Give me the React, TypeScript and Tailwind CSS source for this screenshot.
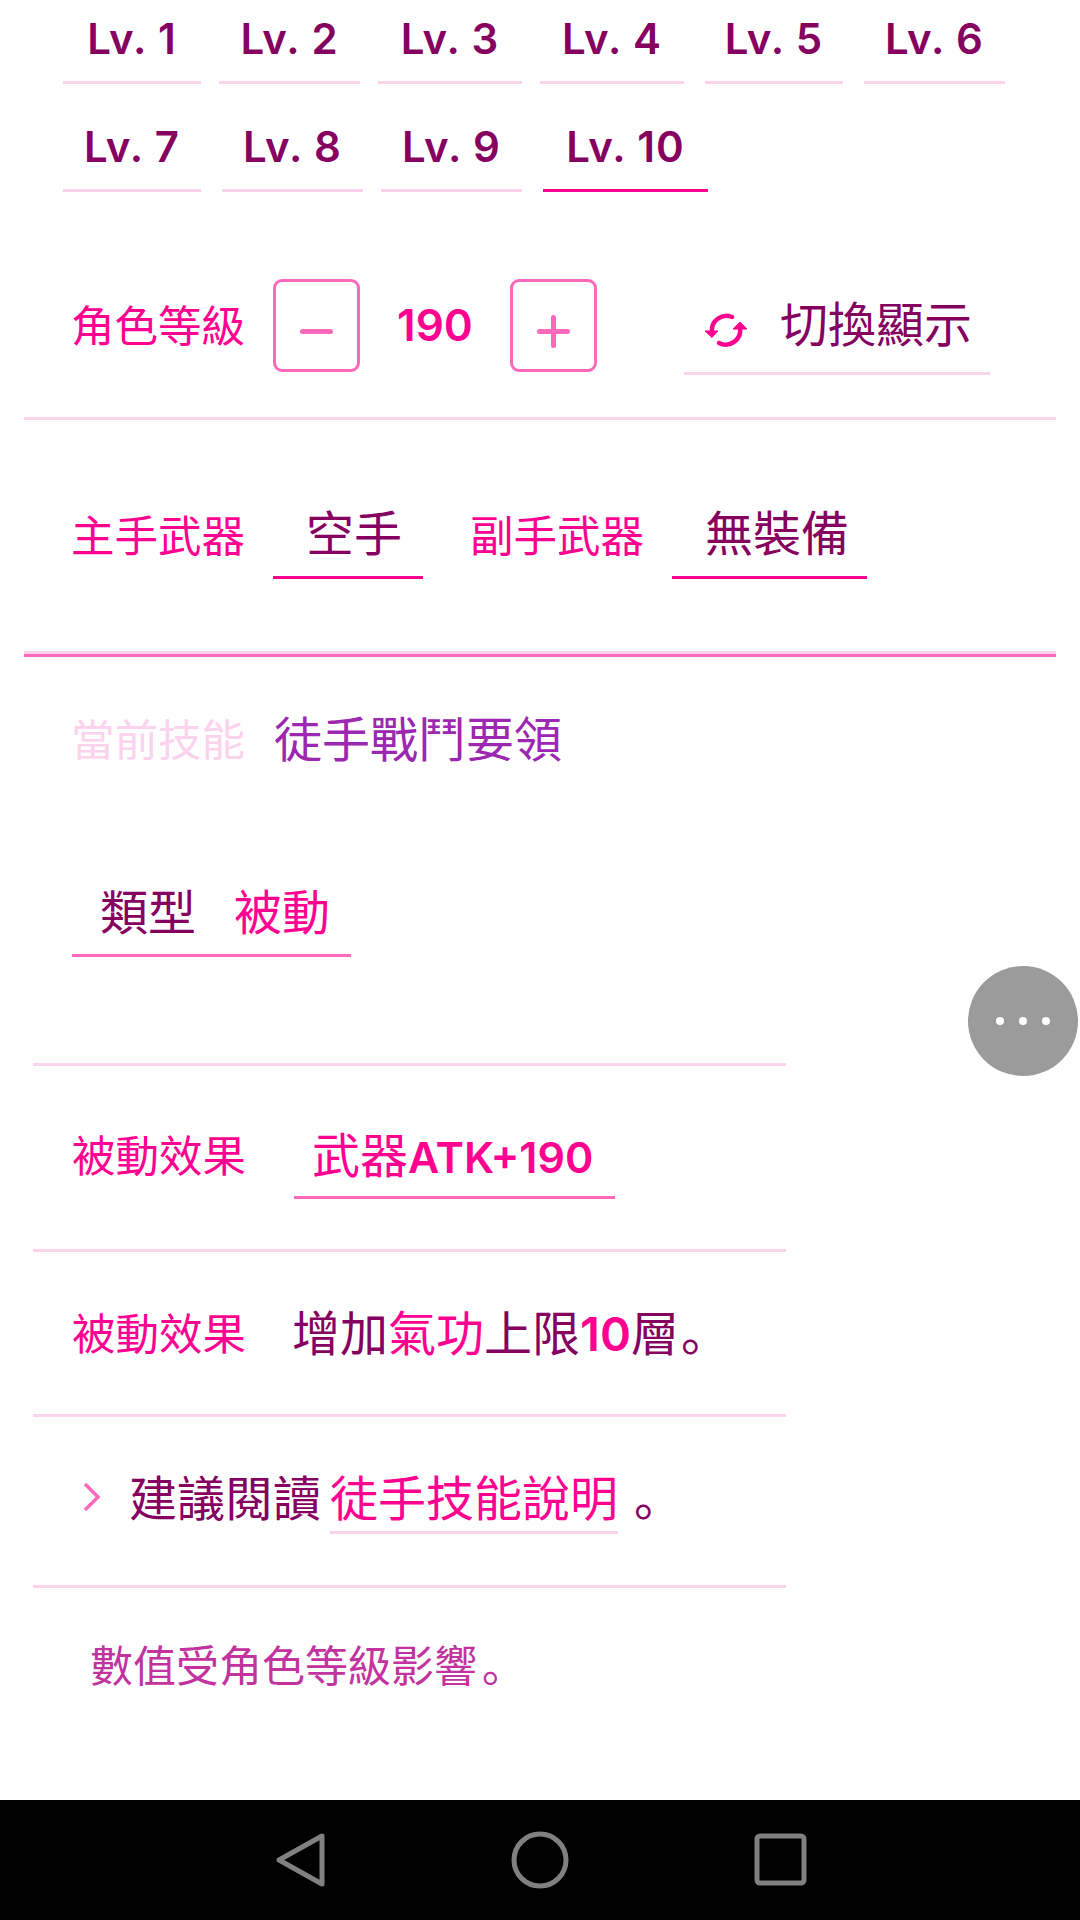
import React from "react";

const font = { fontFamily: '"Inter", "Noto Sans CJK SC", sans-serif' };

function Tab({ label, w, active }: { label: string; w: string; active?: boolean }) {
  return (
    <div className={`${w} h-[84px] shrink-0 flex items-start justify-center border-b-[3px] ${active ? "border-[#ff0090]" : "border-[#fcd3ec]"}`}>
      <span className="mt-[15px] text-[42px] leading-[48px] tracking-[1px] font-semibold text-[#85005f] whitespace-nowrap">{label}</span>
    </div>
  );
}

function Stepper({ sign }: { sign: "-" | "+" }) {
  return (
    <div className="w-[87px] h-[93px] shrink-0 rounded-[9px] border-[3px] border-[#ff69bb] flex items-center justify-center pt-[12px]">
      <svg width="33" height="33" viewBox="0 0 33 33">
        <path d={sign === "-" ? "M2.5 16.5H30.5" : "M2.5 16.5H30.5M16.5 2.5V30.5"} stroke="#ff69bb" strokeWidth="5" strokeLinecap="round" fill="none" />
      </svg>
    </div>
  );
}

function Divider() {
  return <div className="h-[3px] shrink-0 w-[753px] ml-[33px] bg-[#fcd3ec]" />;
}

export default function App() {
  return (
    <div style={font} className="relative w-[1080px] h-[1920px] bg-white overflow-hidden flex flex-col">
      <div className="h-[192px] shrink-0 pl-[63px] flex flex-col gap-[24px]">
        <div className="flex h-[84px]">
          <Tab label="Lv. 1" w="w-[138px]" />
          <div className="w-[18px]" />
          <Tab label="Lv. 2" w="w-[141px]" />
          <div className="w-[18px]" />
          <Tab label="Lv. 3" w="w-[144px]" />
          <div className="w-[18px]" />
          <Tab label="Lv. 4" w="w-[144px]" />
          <div className="w-[21px]" />
          <Tab label="Lv. 5" w="w-[138px]" />
          <div className="w-[21px]" />
          <Tab label="Lv. 6" w="w-[141px]" />
        </div>
        <div className="flex h-[84px]">
          <Tab label="Lv. 7" w="w-[138px]" />
          <div className="w-[21px]" />
          <Tab label="Lv. 8" w="w-[141px]" />
          <div className="w-[18px]" />
          <Tab label="Lv. 9" w="w-[141px]" />
          <div className="w-[21px]" />
          <Tab label="Lv. 10" w="w-[165px]" active />
        </div>
      </div>

      <div className="h-[228px] shrink-0 ml-[24px] w-[1032px] border-b-[3px] border-[#fcd3ec] pl-[47px] pt-[87px] flex items-start">
        <span className="text-[43.5px] leading-[94px] text-[#ff0090] w-[202px] shrink-0 whitespace-nowrap">角色等級</span>
        <Stepper sign="-" />
        <span className="w-[150px] shrink-0 text-center text-[44px] leading-[93px] font-semibold text-[#ff0090]">190</span>
        <Stepper sign="+" />
        <div className="ml-[87px] w-[306px] h-[96px] border-b-[3px] border-[#fcd3ec] flex items-start shrink-0">
          <svg className="ml-[20px] mt-[33px] shrink-0" width="46" height="46" viewBox="0 0 46 46">
            <path d="M8 20 A14.5 14.5 0 0 1 28 5" stroke="#ff0090" strokeWidth="4.5" fill="none" strokeLinecap="round" />
            <path d="M36 16 A14.5 14.5 0 0 1 15 31" stroke="#ff0090" strokeWidth="4.5" fill="none" strokeLinecap="round" />
            <path d="M1 19 L14 19 L8 25.5 Z M29 17 L43 17 L36 10 Z" fill="#ff0090" stroke="#ff0090" strokeLinejoin="round" />
          </svg>
          <span className="ml-[30px] text-[48px] leading-[64px] mt-[14px] text-[#85005f] whitespace-nowrap">切換顯示</span>
        </div>
      </div>

      <div className="h-[231px] shrink-0 ml-[24px] w-[1032px] pl-[47px] pt-[81px] flex items-start">
        <span className="text-[43.5px] leading-[70px] text-[#ff0090] w-[202px] shrink-0 whitespace-nowrap">主手武器</span>
        <div className="w-[150px] h-[78px] shrink-0 border-b-[3px] border-[#ff0090] pl-[33px] pt-[1px]">
          <span className="text-[48px] leading-[64px] text-[#85005f] whitespace-nowrap">空手</span>
        </div>
        <span className="ml-[47px] text-[43.5px] leading-[70px] text-[#ff0090] w-[202px] shrink-0 whitespace-nowrap">副手武器</span>
        <div className="w-[195px] h-[78px] shrink-0 border-b-[3px] border-[#ff0090] pl-[33px] pt-[1px]">
          <span className="text-[48px] leading-[64px] text-[#85005f] whitespace-nowrap">無裝備</span>
        </div>
      </div>

      <div className="h-[3px] shrink-0 ml-[24px] w-[1032px] bg-[#fcd3ec]" />
      <div className="h-[3px] shrink-0 ml-[24px] w-[1032px] bg-[#ff69bb]" />

      <div className="h-[160px] shrink-0 pl-[71px] pt-[51px] flex items-start">
        <span className="text-[43.5px] leading-[64px] text-[#fcd3ec] w-[203px] shrink-0 whitespace-nowrap">當前技能</span>
        <span className="text-[48px] leading-[64px] text-[#9c27b0] whitespace-nowrap">徒手戰鬥要領</span>
      </div>

      <div className="h-[140px] shrink-0 pl-[72px] pt-[39px]">
        <div className="w-[279px] h-[101px] border-b-[3px] border-[#ff69bb] pl-[28px] pt-[25px] flex">
          <span className="text-[48px] leading-[64px] text-[#85005f] w-[134px] shrink-0 whitespace-nowrap">類型</span>
          <span className="text-[48px] leading-[64px] text-[#ff0090] whitespace-nowrap">被動</span>
        </div>
      </div>

      <div className="h-[109px] shrink-0 pt-[106px]">
        <Divider />
      </div>

      <div className="h-[183px] shrink-0 pl-[72px] pt-[58px] flex items-start">
        <span className="text-[43.5px] leading-[64px] text-[#ff0090] w-[222px] shrink-0 whitespace-nowrap">被動效果</span>
        <div className="w-[321px] h-[75px] border-b-[3px] border-[#ff69bb] pl-[18px] whitespace-nowrap">
          <span className="text-[48px] leading-[64px] text-[#ff0090]">武器<span className="text-[43px] font-semibold">ATK+190</span></span>
        </div>
      </div>

      <Divider />

      <div className="h-[162px] shrink-0 pl-[72px] pt-[50px] flex items-start">
        <span className="text-[43.5px] leading-[64px] text-[#ff0090] w-[222px] shrink-0 whitespace-nowrap">被動效果</span>
        <span className="text-[48px] leading-[64px] text-[#85005f] whitespace-nowrap -ml-[2px]">
          增加<span className="text-[#ff0090]">氣功</span>上限<span className="text-[#ff0090] text-[47px] font-semibold">10</span>層<span className="ml-[2px]">。</span>
        </span>
      </div>

      <Divider />

      <div className="h-[168px] shrink-0 pl-[83px] pt-[50px] flex items-start">
        <svg className="mt-[15px] shrink-0" width="17" height="30" viewBox="0 0 17 30">
          <path d="M2 2 L15 15 L2 28" stroke="#ff69bb" strokeWidth="3.5" fill="none" />
        </svg>
        <span className="ml-[29px] text-[48px] leading-[64px] text-[#85005f] w-[201px] shrink-0 whitespace-nowrap">建議閱讀</span>
        <span className="w-[288px] h-[67px] shrink-0 border-b-[3px] border-[#fcd3ec] text-[48px] leading-[64px] text-[#ff0090] text-center whitespace-nowrap">徒手技能說明</span>
        <span className="ml-[16px] text-[48px] leading-[64px] text-[#85005f]">。</span>
      </div>

      <Divider />

      <div className="flex-1 pl-[90px] pt-[46px]">
        <span className="text-[43px] leading-[64px] text-[#c2339f] whitespace-nowrap">數值受角色等級影響<span className="ml-[5px]">。</span></span>
      </div>

      <div className="h-[120px] shrink-0 bg-black flex items-center justify-start pl-[276px]">
        <svg width="540" height="60" viewBox="0 0 540 60" fill="none" stroke="#808080" strokeWidth="5" strokeLinejoin="round">
          <path d="M46 6 L46 54 L3 30 Z" />
          <circle cx="264" cy="30" r="26" />
          <rect x="481" y="6" width="47" height="47" rx="3" />
        </svg>
      </div>

      <div className="absolute left-[968px] top-[966px] w-[110px] h-[110px] rounded-full bg-[#9b9b9b] flex items-center justify-center gap-[15px]">
        <span className="w-[8px] h-[8px] rounded-full bg-white" />
        <span className="w-[8px] h-[8px] rounded-full bg-white" />
        <span className="w-[8px] h-[8px] rounded-full bg-white" />
      </div>
    </div>
  );
}
